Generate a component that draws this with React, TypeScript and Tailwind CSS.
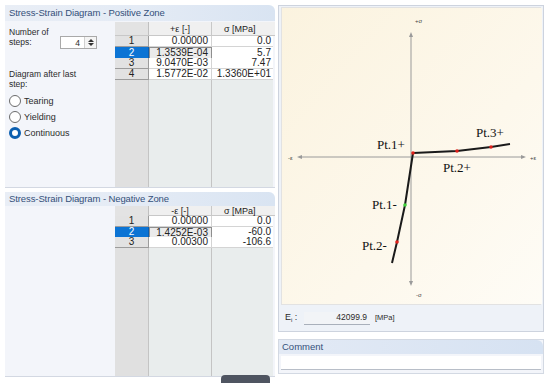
import React from 'react';

const posRows = [
  ['1', '0.00000', '0.0'],
  ['2', '1.3539E-04', '5.7'],
  ['3', '9.0470E-03', '7.47'],
  ['4', '1.5772E-02', '1.3360E+01'],
];

const negRows = [
  ['1', '0.00000', '0.0'],
  ['2', '1.4252E-03', '-60.0'],
  ['3', '0.00300', '-106.6'],
];

function SectionHeader({ title, h }: { title: string; h: string }) {
  return (
    <div className={`${h} flex items-center pl-[4px] bg-gradient-to-r from-[#e9eef6] via-[#e4ebf5] to-[#d9e4f2] rounded-tr-[6px] text-[9.5px] tracking-[-0.1px] text-[#34507a]`}>
      {title}
    </div>
  );
}

function DataTable({ head, rows, headH, rowH }: { head: string; rows: string[][]; headH: string; rowH: string }) {
  return (
    <div className="w-[160px] flex flex-col text-[10px] leading-[10px] text-[#222]">
      <div className={`${headH} grid grid-cols-[34px_63px_61px] bg-[#f0f0f0] border-b border-[#c8c8c8] text-[9px]`}>
        <div className="bg-[#e3e3e3] border-r border-[#c0c0c0]" />
        <div className="flex items-center justify-center border-r border-[#c8c8c8]">{head}</div>
        <div className="flex items-center pl-[12px]">σ [MPa]</div>
      </div>
      {rows.map((r) => (
        <div key={r[0]} className={`${rowH} grid grid-cols-[34px_63px_61px]`}>
          <div
            className={`flex items-center justify-center border-b border-r ${
              r[0] === '2' ? 'bg-[#0c74d4] text-white border-[#0a5eb0]' : 'bg-[#e2e2e2] border-[#9c9c9c]'
            }`}
          >
            {r[0]}
          </div>
          <div
            className={`flex items-center justify-end pr-[3px] ${
              r[0] === '2' ? 'bg-[#ebebeb] border border-[#8e8e8e]' : 'bg-white border-b border-r border-[#d4d4d4]'
            }`}
          >
            {r[1]}
          </div>
          <div className="flex items-center justify-end pr-[2px] bg-white border-b border-[#d4d4d4]">{r[2]}</div>
        </div>
      ))}
      <div className="flex-1 grid grid-cols-[34px_63px_61px]">
        <div className="bg-[#e0e0e0] border-r border-[#c4c4c4]" />
        <div className="bg-[#e9eded] border-r border-[#c4c4c4]" />
        <div className="bg-[#e9eded]" />
      </div>
    </div>
  );
}

function Radio({ label, checked }: { label: string; checked?: boolean }) {
  return (
    <div className="flex items-center gap-[3px] h-[14px]">
      <span
        className={`w-[12px] h-[12px] rounded-full bg-white ${
          checked ? 'border-[3.5px] border-[#0b5fb0]' : 'border border-[#6b6b6b]'
        }`}
      />
      <span>{label}</span>
    </div>
  );
}

function Chart() {
  const red = '#e0201a';
  return (
    <svg width="260" height="296" viewBox="0 0 260 296" className="block">
      <defs>
        <linearGradient id="bg" x1="0" y1="0" x2="1" y2="1">
          <stop offset="0" stopColor="#fbf3df" />
          <stop offset="0.6" stopColor="#fdf8ec" />
          <stop offset="1" stopColor="#fefcf6" />
        </linearGradient>
      </defs>
      <rect width="260" height="296" fill="url(#bg)" />
      {/* axes */}
      <line x1="129" y1="27" x2="129" y2="275" stroke="#9a9a9a" strokeWidth="1" />
      <line x1="18" y1="149" x2="241" y2="149" stroke="#9a9a9a" strokeWidth="1" />
      <path d="M129 24 L127 29 L131 29 Z" fill="#9a9a9a" />
      <path d="M129 278 L127 273 L131 273 Z" fill="#9a9a9a" />
      <path d="M15 149 L20 147 L20 151 Z" fill="#9a9a9a" />
      <path d="M244 149 L239 147 L239 151 Z" fill="#9a9a9a" />
      <text x="133" y="15" fontSize="6" fill="#444" fontFamily="Liberation Sans, sans-serif">+σ</text>
      <text x="134" y="289" fontSize="6" fill="#444" fontFamily="Liberation Sans, sans-serif">-σ</text>
      <text x="6" y="152" fontSize="6" fill="#444" fontFamily="Liberation Sans, sans-serif">-ε</text>
      <text x="248" y="152" fontSize="6" fill="#444" fontFamily="Liberation Sans, sans-serif">+ε</text>
      {/* curve */}
      <polyline
        points="228,136 209,139 175,143 131,145 123,197 115,234 110,255"
        fill="none"
        stroke="#1a1a1a"
        strokeWidth="2"
        strokeLinejoin="round"
      />
      <circle cx="131" cy="145" r="1.8" fill={red} />
      <circle cx="175" cy="143" r="1.8" fill={red} />
      <circle cx="209" cy="139" r="1.8" fill={red} />
      <circle cx="115" cy="234" r="1.8" fill={red} />
      <circle cx="123" cy="197" r="1.8" fill="#3fcf3a" />
      <g fontFamily="Liberation Serif, serif" fontSize="13" fill="#111">
        <text x="95" y="141">Pt.1+</text>
        <text x="194" y="129">Pt.3+</text>
        <text x="161" y="164">Pt.2+</text>
        <text x="90" y="201">Pt.1-</text>
        <text x="80" y="242">Pt.2-</text>
      </g>
    </svg>
  );
}

export default function App() {
  return (
    <div
      className="w-[550px] h-[383px] bg-white flex pt-[5px] pl-[5px] gap-[3px] relative overflow-hidden text-[#2b2b2b]"
      style={{ fontFamily: '"Liberation Sans", Arial, sans-serif' }}
    >
      {/* left column */}
      <div className="w-[270px] flex flex-col">
        {/* positive zone */}
        <div className="h-[183px] flex flex-col border-b border-[#d3d8e2]">
          <SectionHeader title="Stress-Strain Diagram - Positive Zone" h="h-[16px]" />
          <div className="flex-1 flex bg-[#f3f5fa] pt-[1px]">
            <div className="w-[110px] flex flex-col pl-[4px] text-[8.5px] leading-[10px]">
              <div className="flex items-start mt-[5px]">
                <div className="w-[51px]">
                  <div>Number of</div>
                  <div>steps:</div>
                </div>
                <div className="mt-[9px] w-[37px] h-[13px] bg-white border border-[#a9a9a9] flex">
                  <div className="flex-1 flex items-center justify-end pr-[4px]">4</div>
                  <div className="w-[12px] flex flex-col items-center justify-center gap-[1px] border-l border-[#d0d0d0] bg-[#f4f4f4]">
                    <span className="w-0 h-0 border-l-[3px] border-r-[3px] border-b-[3px] border-l-transparent border-r-transparent border-b-[#333]" />
                    <span className="w-0 h-0 border-l-[3px] border-r-[3px] border-t-[3px] border-l-transparent border-r-transparent border-t-[#333]" />
                  </div>
                </div>
              </div>
              <div className="mt-[20px]">Diagram after last</div>
              <div>step:</div>
              <div className="mt-[5px] flex flex-col gap-[2px] text-[9px]">
                <Radio label="Tearing" />
                <Radio label="Yielding" />
                <Radio label="Continuous" checked />
              </div>
            </div>
            <DataTable head="+ε [-]" rows={posRows} headH="h-[14px]" rowH="h-[11px]" />
          </div>
        </div>
        {/* negative zone */}
        <div className="mt-[4px] flex-1 flex flex-col mb-[6px] border-b border-[#d3d8e2]">
          <SectionHeader title="Stress-Strain Diagram - Negative Zone" h="h-[14px]" />
          <div className="flex-1 flex bg-[#f3f5fa]">
            <div className="w-[110px]" />
            <DataTable head="-ε [-]" rows={negRows} headH="h-[10px]" rowH="h-[10.5px]" />
          </div>
        </div>
      </div>

      {/* right column */}
      <div className="w-[266px] flex flex-col">
        <div className="h-[327px] border border-[#cdd3de] bg-[#eef2f8] flex flex-col px-[2px] pt-[1px]">
          <div className="border border-[#e2e2e2]">
            <Chart />
          </div>
          <div className="flex-1 flex items-center pl-[4px] text-[9px]">
            <span className="w-[19px]">
              E<sub className="text-[6px]">i</sub> :
            </span>
            <div className="w-[66px] h-[13px] bg-[#f2f4f7] border-b border-[#a9b0bb] flex items-center justify-end pr-[3px] text-[8.5px]">
              42099.9
            </div>
            <span className="ml-[5px] text-[7.5px]">[MPa]</span>
          </div>
        </div>
        <div className="mt-[7px] h-[35px] border border-[#d3d9e3] flex flex-col bg-[#f3f5fa]">
          <div className="h-[14px] flex items-center pl-[3px] bg-gradient-to-r from-[#e3eaf5] to-[#d6e2f2] rounded-tr-[6px] text-[9.5px] text-[#34507a]">
            Comment
          </div>
          <div className="mx-[2px] mt-[2px] h-[14px] bg-white border-b border-[#b8bec8]" />
        </div>
      </div>

      <div className="absolute left-[221px] top-[375px] w-[49px] h-[10px] rounded-t-[4px] bg-[#4f5561]" />
    </div>
  );
}
